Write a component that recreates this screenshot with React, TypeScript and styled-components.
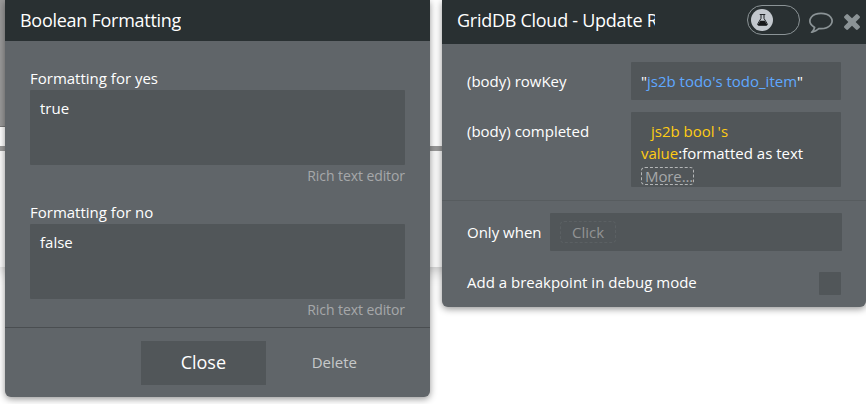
import React from "react";
import styled, { createGlobalStyle } from "styled-components";

const GlobalStyle = createGlobalStyle`
  *, *::before, *::after { box-sizing: border-box; }
  body {
    margin: 0;
    background: #fff;
    font-family: "Open Sans", "Noto Sans", sans-serif;
    font-size: 15px;
    line-height: 22px;
    color: #fff;
    overflow: hidden;
  }
`;

const Page = styled.div`
  display: grid;
  width: 866px;
  height: 404px;
  overflow: hidden;
  > * { grid-area: 1 / 1; }
`;

const Canvas = styled.div`
  display: flex;
  flex-direction: column;
  height: 267px;
  background: #fafafa;
  box-shadow: 0 3px 14px rgba(0, 0, 0, 0.25);
`;

const CanvasTop = styled.div`
  height: 151px;
  background: #fff;
  border-bottom: 5px solid #999;
`;

const CanvasBlock = styled.div`
  width: 14px;
  height: 127px;
  background: #999;
  border-bottom: 1px solid #777;
`;

const Desktop = styled.div`
  display: flex;
  align-items: flex-start;
  gap: 12px;
  padding-left: 5px;
`;

const Panel = styled.section<{ $w: number; $h: number }>`
  flex: none;
  width: ${(p) => p.$w}px;
  height: ${(p) => p.$h}px;
  background: #606569;
  border-radius: 0 0 6px 6px;
  box-shadow: 0 2px 7px rgba(0, 0, 0, 0.42);
  overflow: hidden;
`;

const Header = styled.header<{ $h: number }>`
  display: flex;
  height: ${(p) => p.$h}px;
  padding-left: 15px;
  background: #293032;
`;

const Title = styled.h1<{ $w?: number }>`
  margin: 0;
  width: ${(p) => (p.$w ? `${p.$w}px` : "auto")};
  height: 41px;
  overflow: hidden;
  white-space: nowrap;
  font-size: 18px;
  font-weight: 400;
  line-height: 41px;
  letter-spacing: -0.27px;
`;

const Actions = styled.div`
  display: flex;
  align-items: flex-start;
  padding: 5px 0 0 92px;
`;

const Toggle = styled.div`
  display: flex;
  width: 53px;
  height: 30px;
  padding: 3px;
  border: 1px solid #8b9396;
  border-radius: 15px;
`;

const Knob = styled.span`
  display: grid;
  place-items: center;
  width: 22px;
  height: 22px;
  border-radius: 50%;
  background: #c3c8ce;
`;

const Glyph = styled.svg<{ $left: number; $top: number }>`
  display: block;
  flex: none;
  margin: ${(p) => p.$top}px 0 0 ${(p) => p.$left}px;
  fill: #8b9396;
`;

const FormatFields = styled.div`
  display: flex;
  flex-direction: column;
  gap: 12px;
  height: 287px;
  padding: 27px 25px 0;
  border-bottom: 1px solid #4a4e51;
`;

const FormatField = styled.div`
  height: 122px;
`;

const FieldLabel = styled.div`
  height: 22px;
  line-height: 20px;
`;

const TextBox = styled.div`
  height: 75px;
  padding: 7px 10px;
  border-radius: 1px;
  background: #515659;
`;

const RichLink = styled.div`
  text-align: right;
  font-size: 14px;
  letter-spacing: -0.08px;
  color: #a6a8aa;
`;

const Footer = styled.footer`
  display: flex;
  align-items: center;
  padding: 13px 73px 0 136px;
`;

const CloseButton = styled.button`
  width: 125px;
  height: 44px;
  padding: 0 0 2px;
  border: 0;
  background: #515659;
  color: #fff;
  font: 400 18px/42px "Open Sans", sans-serif;
`;

const DeleteButton = styled.button`
  margin-left: 46px;
  padding: 0 0 2px;
  border: 0;
  background: none;
  color: #c7c9ca;
  font: 400 15px/22px "Open Sans", sans-serif;
`;

const Parameters = styled.div`
  display: flex;
  flex-direction: column;
  gap: 12px;
  height: 157px;
  padding: 18px 25px 0;
  border-bottom: 1px solid #575c5f;
`;

const Row = styled.div`
  display: flex;
  justify-content: space-between;
`;

const RowLabel = styled.span`
  padding-top: 8px;
  white-space: nowrap;
`;

const Expression = styled.div<{ $h: number }>`
  width: 210px;
  height: ${(p) => p.$h}px;
  padding: 8px 0 0 10px;
  border-radius: 1px;
  background: #515659;
  white-space: nowrap;
`;

const Line = styled.div<{ $indent?: number }>`
  height: 22px;
  padding-left: ${(p) => p.$indent ?? 0}px;
`;

const Token = styled.span<{ $color: string; $gap?: number }>`
  color: ${(p) => p.$color};
  margin-left: ${(p) => p.$gap ?? 0}px;
`;

const More = styled.div`
  display: flex;
  width: 53px;
  height: 18px;
  margin-top: 3px;
  padding-left: 3px;
  border: 1px dashed #b4b6b7;
  border-radius: 4px;
  color: #a6a8aa;
  line-height: 16px;
  letter-spacing: -0.1px;
`;

const Conditions = styled.div`
  display: flex;
  flex-direction: column;
  gap: 21px;
  padding: 12px 24px 0 25px;
`;

const ClickBox = styled.div`
  width: 292px;
  height: 38px;
  padding: 8px 10px;
  border-radius: 1px;
  background: #515659;
`;

const ClickHint = styled.div`
  width: 56px;
  height: 22px;
  border: 1px dashed #5b6063;
  border-radius: 4px;
  color: #919394;
  line-height: 21px;
  text-align: center;
`;

const BreakpointRow = styled.div`
  display: flex;
  justify-content: space-between;
  padding-right: 1px;
  line-height: 20px;
`;

const Checkbox = styled.span`
  width: 22px;
  height: 23px;
  border-radius: 1px;
  background: #515659;
`;

function FlaskIcon() {
  return (
    <svg width="11" height="12" viewBox="0 0 11 12">
      <path
        d="M2.7 0.5H8.3M4 0.5V4.4L0.9 9.6Q0.2 11.3 1.6 11.3H9.4Q10.8 11.3 10.1 9.6L7 4.4V0.5"
        fill="none"
        stroke="#202427"
        strokeWidth="1"
      />
      <path d="M3.4 6.7H7.6L10 10.3V11.3H1V10.3Z" fill="#17191b" />
    </svg>
  );
}

function CommentIcon() {
  return (
    <Glyph $left={9} $top={4} width="24" height="24" viewBox="0 0 1792 1792">
      <path d="M896 384q-204 0-381.5 69.5t-282 187.5-104.5 255q0 112 71.5 213.5t201.5 175.5l87 50-27 96q-24 91-70 172 152-63 275-171l43-38 57 6q69 8 130 8 204 0 381.5-69.5t282-187.5 104.5-255-104.5-255-282-187.5-381.5-69.5zm896 512q0 174-120 321.5t-326 233-450 85.5q-70 0-145-8-198 175-460 242-49 14-114 22h-5q-15 0-27-10.5t-16-27.5v-1q-3-4-.5-12t2-10 4.5-9.5l6-9 7-8.5 8-9q7-8 31-34.5t34.5-38 31-39.5 32.5-51 27-59 26-76q-157-89-247.5-220t-90.5-281q0-174 120-321.5t326-233 450-85.5 450 85.5 326 233 120 321.5z" />
    </Glyph>
  );
}

function TimesIcon() {
  return (
    <Glyph $left={11} $top={9} width="16" height="16" viewBox="302 366 1188 1188">
      <path d="M1490 1322q0 40-28 68l-136 136q-28 28-68 28t-68-28l-294-294-294 294q-28 28-68 28t-68-28l-136-136q-28-28-28-68t28-68l294-294-294-294q-28-28-28-68t28-68l136-136q28-28 68-28t68 28l294 294 294-294q28-28 68-28t68 28l136 136q28 28 28 68t-28 68l-294 294 294 294q28 28 28 68z" />
    </Glyph>
  );
}

const formats = [
  { label: "Formatting for yes", value: "true" },
  { label: "Formatting for no", value: "false" },
];

function FormattingPanel() {
  return (
    <Panel $w={425} $h={397}>
      <Header $h={41}>
        <Title>Boolean Formatting</Title>
      </Header>
      <FormatFields>
        {formats.map((f) => (
          <FormatField key={f.label}>
            <FieldLabel>{f.label}</FieldLabel>
            <TextBox>{f.value}</TextBox>
            <RichLink>Rich text editor</RichLink>
          </FormatField>
        ))}
      </FormatFields>
      <Footer>
        <CloseButton>Close</CloseButton>
        <DeleteButton>Delete</DeleteButton>
      </Footer>
    </Panel>
  );
}

function ActionPanel() {
  return (
    <Panel $w={424} $h={307}>
      <Header $h={44}>
        <Title $w={198}>GridDB Cloud - Update Row</Title>
        <Actions>
          <Toggle>
            <Knob>
              <FlaskIcon />
            </Knob>
          </Toggle>
          <CommentIcon />
          <TimesIcon />
        </Actions>
      </Header>
      <Parameters>
        <Row>
          <RowLabel>(body) rowKey</RowLabel>
          <Expression $h={38}>
            "<Token $color="#5fa8ff">js2b todo's todo_item</Token>"
          </Expression>
        </Row>
        <Row>
          <RowLabel>(body) completed</RowLabel>
          <Expression $h={75}>
            <Line $indent={10}>
              <Token $color="#ffcc14">js2b bool</Token>
              <Token $color="#ffcc14" $gap={3}>'s</Token>
            </Line>
            <Line>
              <Token $color="#ffcc14">value</Token>:formatted as text
            </Line>
            <More>More...</More>
          </Expression>
        </Row>
      </Parameters>
      <Conditions>
        <Row>
          <RowLabel>Only when</RowLabel>
          <ClickBox>
            <ClickHint>Click</ClickHint>
          </ClickBox>
        </Row>
        <BreakpointRow>
          <span>Add a breakpoint in debug mode</span>
          <Checkbox />
        </BreakpointRow>
      </Conditions>
    </Panel>
  );
}

export default function App() {
  return (
    <>
      <GlobalStyle />
      <Page>
        <Canvas>
          <CanvasTop>
            <CanvasBlock />
          </CanvasTop>
        </Canvas>
        <Desktop>
          <FormattingPanel />
          <ActionPanel />
        </Desktop>
      </Page>
    </>
  );
}
